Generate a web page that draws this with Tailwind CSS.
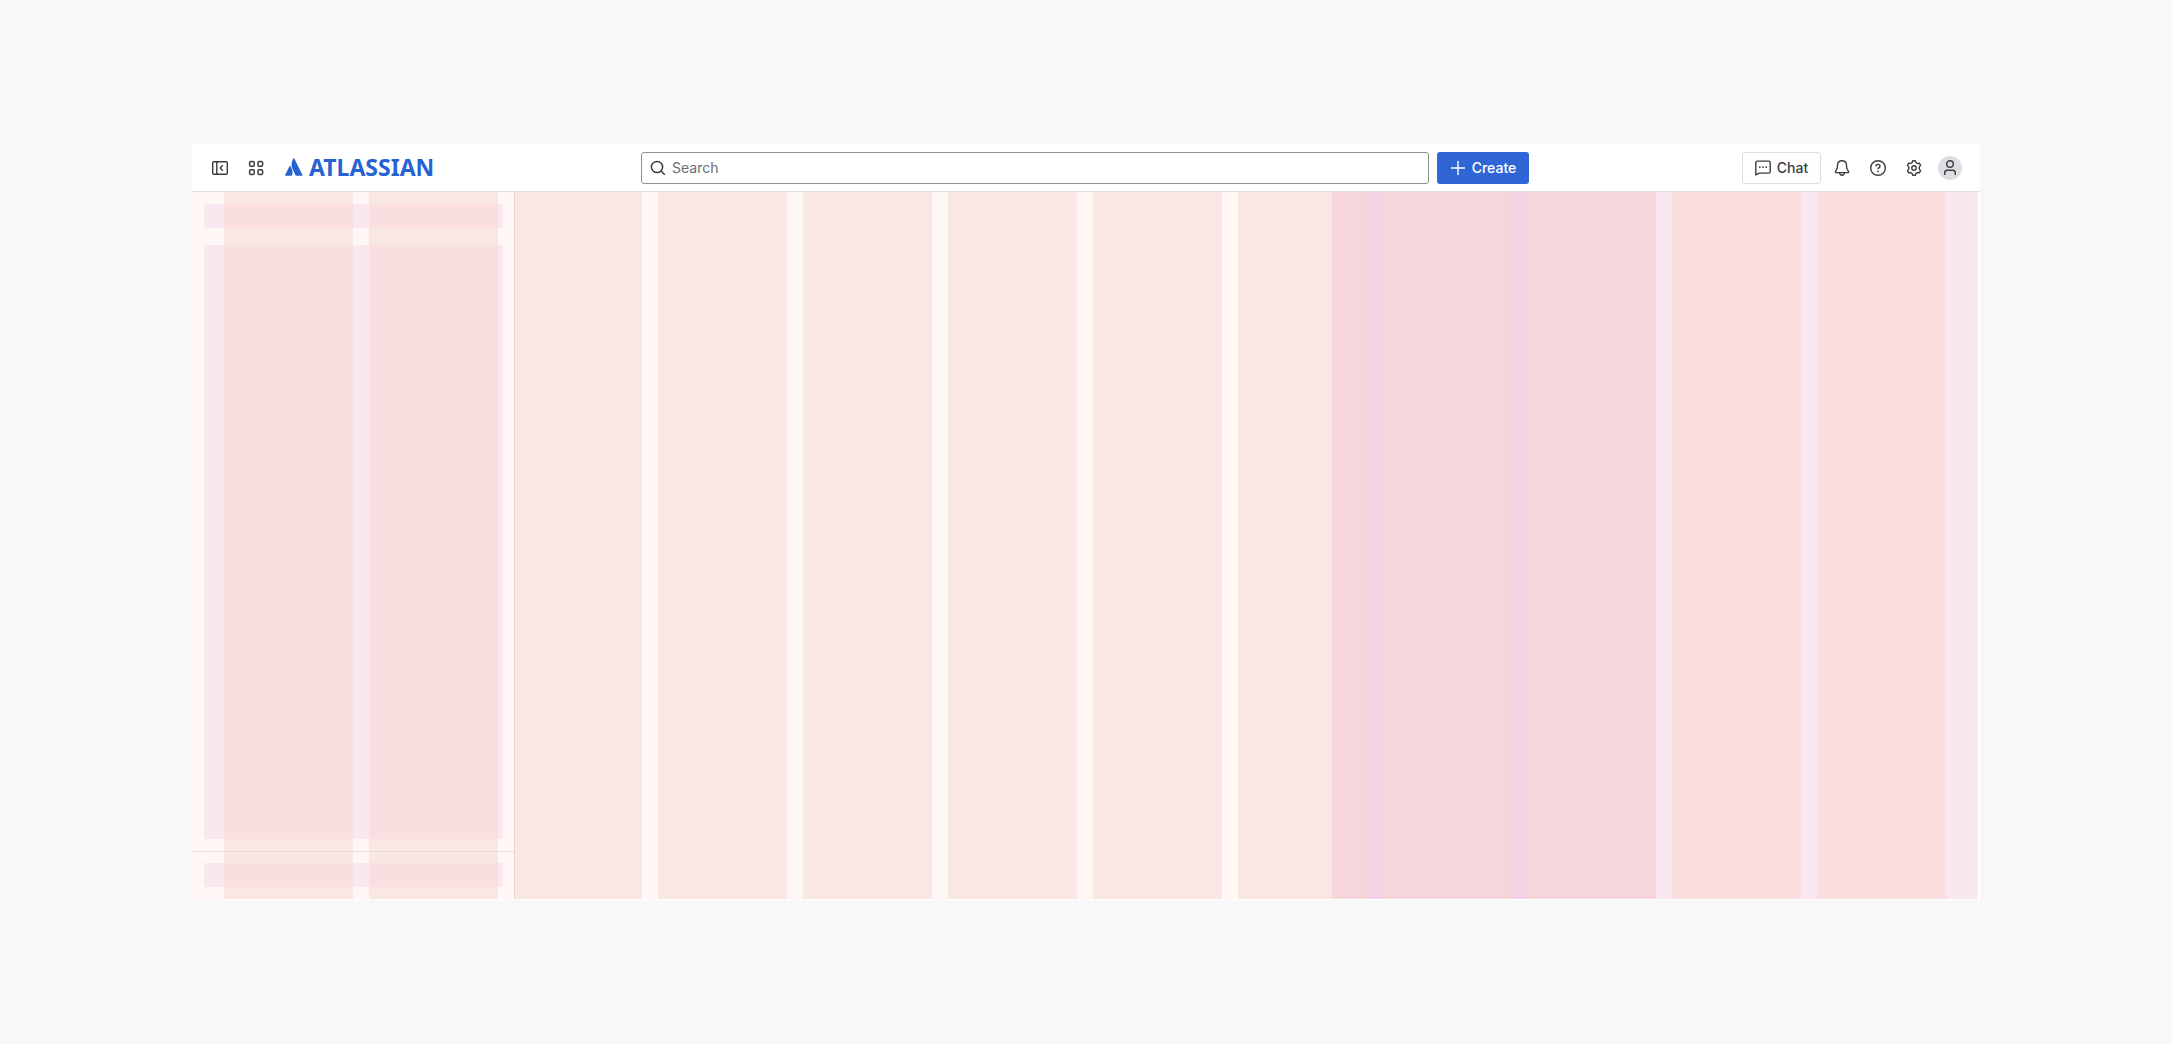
<!DOCTYPE html>
<html lang="en">
<head>
<meta charset="utf-8">
<meta name="viewport" content="width=device-width, initial-scale=1">
<title>Atlassian page layout</title>
<script src="https://cdn.jsdelivr.net/npm/@tailwindcss/browser@4"></script>
</head>
<body class="flex min-h-screen flex-col bg-[#f8f8f8] px-48 py-36 font-['Inter',sans-serif] text-sm text-[#3b3d42]">
<div class="flex flex-1 flex-col bg-white">
  <header class="grid h-12 grid-cols-[minmax(0,1fr)_minmax(0,888px)_minmax(0,1fr)] items-center border-b border-[#dddee1] pr-[14px] pl-3">
    <div class="flex items-center gap-1">
      <button type="button" aria-label="Collapse sidebar" class="grid size-8 place-items-center">
        <svg class="size-4" viewBox="0 0 16 16" fill="none" stroke="currentColor" stroke-width="1.4"><rect x=".7" y="1.700" width="14.600" height="12.600" rx="1.300"/><path d="M4.800 2v12M10.800 5.300 8.200 8l2.600 2.700"/></svg>
      </button>
      <button type="button" aria-label="Switch apps" class="grid size-8 place-items-center">
        <svg class="size-4" viewBox="0 0 16 16" fill="none" stroke="currentColor" stroke-width="1.5"><rect x="1.600" y="1.600" width="4.600" height="4.600" rx="1.200"/><rect x="10" y="1.600" width="4.600" height="4.600" rx="1.200"/><rect x="1.600" y="9.800" width="4.600" height="4.600" rx="1.200"/><rect x="10" y="9.800" width="4.600" height="4.600" rx="1.200"/></svg>
      </button>
      <a href="#" class="ml-2 flex items-center gap-[6px] pb-[2px] pl-px text-[#2762d3]">
        <svg class="size-[18px]" viewBox="0 0 18 18" fill="currentColor"><path d="M5.300 8.300c-.3-.3-.7-.3-.9.100L.1 16.900c-.2.400 0 .8.500.8h5.800c.2 0 .4-.1.500-.3 1.300-2.600.5-6.600-1.600-9.100Z"/><path d="M8.400.5C6 4.200 6.200 8.300 7.800 11.400l2.900 6c.1.200.3.300.5.300H17c.5 0 .7-.4.500-.8L9.300.5c-.2-.4-.7-.4-.9 0Z"/></svg>
        <span class="font-['Noto_Sans',sans-serif] text-[23px] leading-6 font-bold">ATLASSIAN</span>
      </a>
    </div>
    <div class="flex items-center gap-2">
      <label class="flex h-8 min-w-0 flex-1 items-center gap-[6px] rounded-[3px] border border-[#8c8f97] bg-white px-2">
        <svg class="size-4 shrink-0" viewBox="0 0 16 16" fill="none" stroke="currentColor" stroke-width="1.5"><circle cx="7" cy="7" r="5.600"/><path d="m11 11 3.800 3.800"/></svg>
        <input type="search" aria-label="Search" placeholder="Search" class="w-full min-w-0 bg-transparent leading-5 outline-none placeholder:text-[#6b6e76]">
      </label>
      <button type="button" class="flex h-8 w-[92px] items-center justify-center gap-[6px] rounded-[3px] bg-[#3065d5] font-medium text-white">
        <svg class="size-4" viewBox="0 0 16 16" fill="none" stroke="currentColor" stroke-width="1.400"><path d="M8 1v14M1 8h14"/></svg>Create
      </button>
    </div>
    <div class="flex items-center justify-end gap-1">
      <button type="button" class="mr-px flex h-8 w-[79px] items-center justify-center gap-[6px] rounded-[3px] border border-[#dddee1] font-medium">
        <svg class="size-4" viewBox="0 0 16 16" fill="none" stroke="currentColor" stroke-width="1.400" stroke-linejoin="round"><path d="M.8 14.900V2.500c0-.8.600-1.400 1.400-1.400h11.600c.8 0 1.400.600 1.400 1.400v9.200c0 .8-.6 1.400-1.400 1.400H4.200Z"/><g fill="currentColor" stroke="none"><circle cx="4.800" cy="7.100" r=".95"/><circle cx="8" cy="7.100" r=".95"/><circle cx="11.200" cy="7.100" r=".95"/></g></svg>Chat
      </button>
      <button type="button" aria-label="Notifications" class="grid size-8 place-items-center">
        <svg class="size-4" viewBox="0 0 16 16" fill="none" stroke="currentColor" stroke-width="1.400" stroke-linejoin="round"><path d="M8 .7c-2.500 0-4.300 1.800-4.500 4.300l-.2 3-1.900 3.700c-.2.500.1.900.6.900h12c.5 0 .8-.4.600-.9L12.700 8l-.2-3C12.300 2.500 10.500.7 8 .7Z"/><path d="M5.500 12.700c.2 1.600 1.200 2.500 2.500 2.500s2.300-.9 2.500-2.500"/></svg>
      </button>
      <button type="button" aria-label="Help" class="grid size-8 place-items-center">
        <svg class="size-4" viewBox="0 0 16 16" fill="none" stroke="currentColor" stroke-width="1.400"><circle cx="8" cy="8" r="7.300"/><path d="M6 6.400C6 5.200 6.800 4.400 8 4.400s2 .7 2 1.800c0 1.300-2 1.600-2 3.100"/><circle cx="8" cy="11.300" r=".9" fill="currentColor" stroke="none"/></svg>
      </button>
      <button type="button" aria-label="Settings" class="grid size-8 place-items-center">
        <svg class="size-4" viewBox="0 0 16 16" fill="none" stroke="currentColor" stroke-width="1.400" stroke-linejoin="round"><path d="M6.700.8h2.600L9.900 2.600l1.500.9 1.900-.4 1.300 2.300-1.300 1.500v2.200l1.300 1.500-1.300 2.300-1.900-.4-1.500.9-.6 1.800H6.700l-.6-1.800-1.500-.9-1.900.4-1.300-2.300 1.300-1.500V6.900L1.400 5.400l1.300-2.300 1.900.4 1.500-.9Z"/><circle cx="8" cy="8" r="2.200"/></svg>
      </button>
      <button type="button" aria-label="Your profile" class="grid size-8 place-items-center">
        <span class="grid size-6 place-items-center rounded-full bg-[#dddee1]">
          <svg class="size-4" viewBox="0 0 16 16" fill="none" stroke="currentColor" stroke-width="1.400"><circle cx="8" cy="4" r="3.300"/><path d="M2.700 15v-2c0-1.500 1.200-2.700 2.700-2.700h5.200c1.500 0 2.700 1.200 2.700 2.700v2"/></svg>
        </span>
      </button>
    </div>
  </header>

  <div class="relative mr-[2px] mb-px flex flex-1 bg-[#fff7f5]">
    <nav aria-label="Sidebar" class="flex w-[323px] flex-col border-r border-[#e8dddd]">
      <div class="flex flex-1 flex-col gap-[17px] py-3 pr-[11px] pl-3">
        <div class="h-6 bg-[#f9e8ef]"></div>
        <div class="flex-1 bg-[#f9e8ef]"></div>
      </div>
      <div class="border-t border-[#e8dddd] pt-[11px] pr-[11px] pb-3 pl-3">
        <div class="h-6 bg-[#f9e8ef]"></div>
      </div>
    </nav>
    <main class="flex-1"></main>
    <aside aria-label="Panel" class="w-[324px] bg-[#f5d2e8]"></aside>
    <aside aria-label="Aside" class="w-[322px] bg-[#f9e8ef]"></aside>

    <div aria-hidden="true" class="pointer-events-none absolute inset-0 grid grid-cols-12 gap-4 px-8">
      <div class="flex flex-col bg-[#fae7e4]">
        <div class="flex flex-1 flex-col gap-[17px] py-3"><div class="h-6 bg-[#fadfe0]"></div><div class="flex-1 bg-[#fadfe0]"></div></div>
        <div class="border-t border-[#e8dddd] pt-[11px] pb-3"><div class="h-6 bg-[#fadfe0]"></div></div>
      </div>
      <div class="flex flex-col bg-[#fae7e4]">
        <div class="flex flex-1 flex-col gap-[17px] py-3"><div class="h-6 bg-[#fadfe0]"></div><div class="flex-1 bg-[#fadfe0]"></div></div>
        <div class="border-t border-[#e8dddd] pt-[11px] pb-3"><div class="h-6 bg-[#fadfe0]"></div></div>
      </div>
      <div class="border-l border-[#e8d5d4] bg-[#fae7e4]"></div>
      <div class="bg-[#fae7e4]"></div>
      <div class="bg-[#fae7e4]"></div>
      <div class="bg-[#fae7e4]"></div>
      <div class="bg-[#fae7e4]"></div>
      <div class="flex justify-end bg-[#fae7e4]"><div class="w-[35px] bg-[#f6d6da]"></div></div>
      <div class="bg-[#f6d6da]"></div>
      <div class="bg-[#f6d6da]"></div>
      <div class="bg-[#fbdfe0]"></div>
      <div class="bg-[#fbdfe0]"></div>
    </div>
  </div>
</div>
</body>
</html>
